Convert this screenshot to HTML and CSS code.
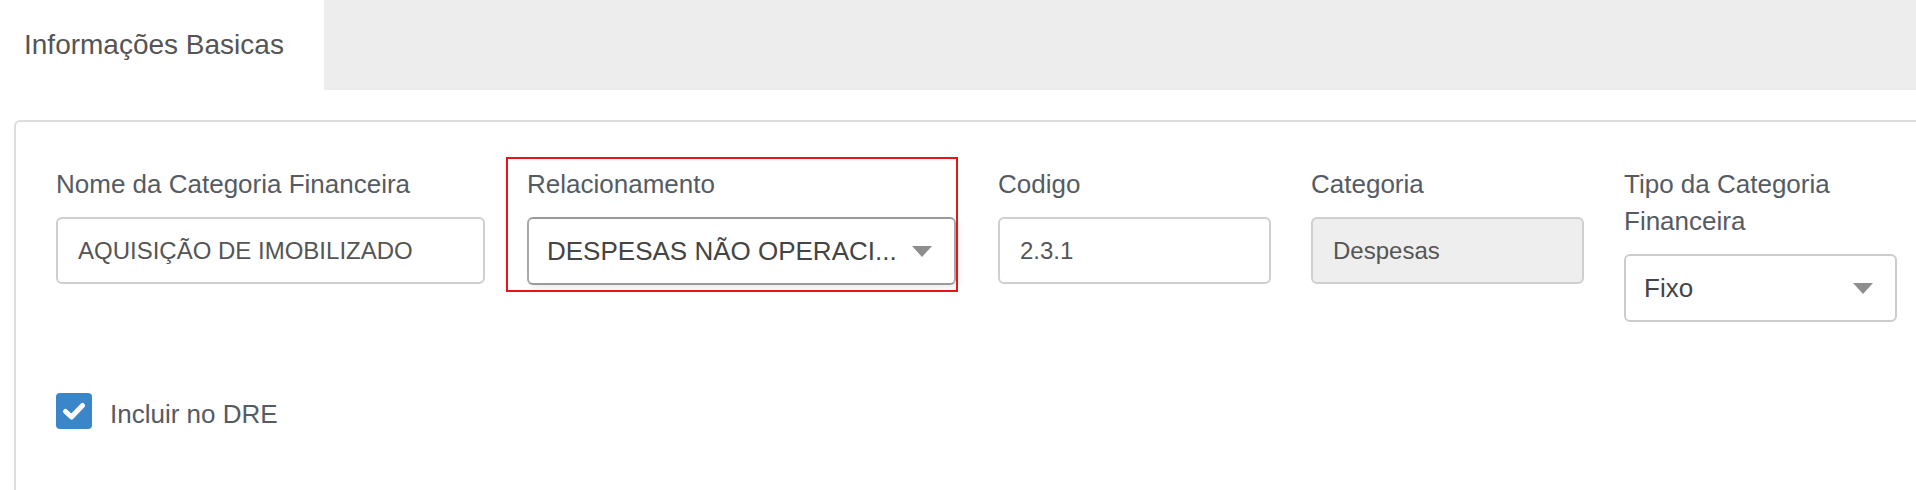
FILE: index.html
```html
<!DOCTYPE html>
<html lang="pt-BR">
<head>
<meta charset="utf-8">
<title>Categoria Financeira</title>
<link rel="stylesheet" href="styles.css">
</head>
<body>
<div class="tabs">
  <div class="tab tab-active">Informações Basicas</div>
  <div class="tab-fill"></div>
</div>
<div class="panel">
  <div class="row">
    <div class="col col-3">
      <div class="label">Nome da Categoria Financeira</div>
      <div class="input">AQUISIÇÃO DE IMOBILIZADO</div>
    </div>
    <div class="col col-3 col-marked">
      <div class="label">Relacionamento</div>
      <div class="select select-focus">
        <span class="select-text">DESPESAS NÃO OPERACI...</span>
        <span class="caret"></span>
      </div>
    </div>
    <div class="col col-2">
      <div class="label">Codigo</div>
      <div class="input">2.3.1</div>
    </div>
    <div class="col col-2">
      <div class="label">Categoria</div>
      <div class="input input-disabled">Despesas</div>
    </div>
    <div class="col col-2">
      <div class="label">Tipo da Categoria Financeira</div>
      <div class="select">
        <span class="select-text">Fixo</span>
        <span class="caret"></span>
      </div>
    </div>
  </div>
  <div class="check-row">
    <span class="checkbox">
      <svg viewBox="0 0 36 36" width="36" height="36" aria-hidden="true">
        <path d="M9.5 18.5 L15.5 24 L26.5 12.5" fill="none" stroke="#fff" stroke-width="5" stroke-linecap="round" stroke-linejoin="round"/>
      </svg>
    </span>
    <span class="check-label">Incluir no DRE</span>
  </div>
</div>
</body>
</html>
```
FILE: styles.css
```css
* {
  box-sizing: border-box;
}

html, body {
  margin: 0;
  padding: 0;
  background: #fff;
  overflow: hidden;
}

body {
  font-family: "Liberation Sans", Arial, sans-serif;
  color: #555;
  width: 1916px;
  height: 490px;
}

.tabs {
  display: flex;
  height: 90px;
}

.tab {
  display: flex;
  align-items: center;
}

.tab-active {
  width: 324px;
  padding-left: 24px;
  font-size: 28px;
  color: #555;
  background: #fff;
}

.tab-fill {
  flex: 1;
  background: #ededed;
}

.panel {
  margin: 30px 0 0 14px;
  width: 1902px;
  height: 370px;
  border-top: 2px solid #dddddd;
  border-left: 2px solid #dddddd;
  border-top-left-radius: 6px;
  padding: 44px 0 0 19px;
  overflow: hidden;
}

.row {
  display: flex;
  align-items: flex-start;
}

.col {
  padding: 0 21px;
  position: relative;
  flex: none;
}

.col-3 {
  width: 471px;
}

.col-2 {
  width: 313px;
  padding-right: 19px;
}

.col-marked::before {
  content: "";
  position: absolute;
  left: 0;
  right: 19px;
  top: -9px;
  bottom: -7px;
  border: 2px solid #e8141b;
}

.label {
  font-size: 26px;
  line-height: 37px;
  color: #555b63;
  margin-bottom: 14px;
}

.input {
  height: 67px;
  border: 2px solid #cfcfcf;
  border-radius: 6px;
  display: flex;
  align-items: center;
  padding-left: 20px;
  color: #555;
  font-size: 24px;
  background: #fff;
}

.input-disabled {
  background: #eeeeee;
}

.select {
  height: 68px;
  border: 2px solid #cccccc;
  border-radius: 6px;
  display: flex;
  align-items: center;
  padding: 0 22px 0 18px;
  font-size: 26px;
  color: #444;
  background: #fff;
}

.select-focus {
  border-color: #a9a9a9;
  border-top-color: #999;
  border-bottom-color: #999;
  box-shadow: 3px 3px 6px rgba(0, 0, 0, 0.08);
}

.select-text {
  flex: 1;
  white-space: nowrap;
  overflow: hidden;
}

.caret {
  width: 0;
  height: 0;
  border-left: 10.5px solid transparent;
  border-right: 10.5px solid transparent;
  border-top: 11px solid #8e8e8e;
}

.check-row {
  display: flex;
  align-items: center;
  margin: 71px 0 0 21px;
  height: 36px;
}

.checkbox {
  width: 36px;
  height: 36px;
  border-radius: 4px;
  background: #3b86c9;
  display: flex;
}

.check-label {
  margin-left: 18px;
  font-size: 26px;
  color: #555b63;
  padding-top: 6px;
}
```
